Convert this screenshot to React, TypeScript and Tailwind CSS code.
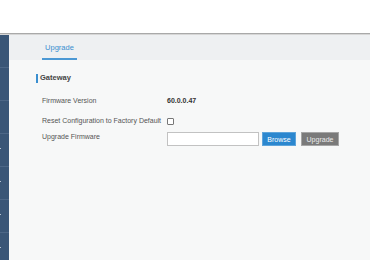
import React from "react";

export default function App() {
  const items = [0, 1, 2, 3, 4, 5, 6];
  return (
    <div
      className="w-[370px] h-[260px] overflow-hidden bg-white flex flex-col"
      style={{ fontFamily: '"Liberation Sans", Arial, sans-serif' }}
    >
      <div className="h-[33px] shrink-0 bg-white" />
      <div className="h-[1px] shrink-0 bg-[#a9a9a9]" />
      <div className="h-[1px] shrink-0 bg-[#d6d6d6]" />
      <div className="flex flex-1 min-h-0">
        <div className="w-[9px] shrink-0 bg-[#3a5677] flex flex-col">
          {items.map((i) => (
            <div
              key={i}
              className="h-[33px] shrink-0 border-b border-[#4d6787] relative"
            >
              {i >= 3 && (
                <div className="absolute left-0 top-[14px] w-[1px] h-[1px] bg-[#b8c4d2]" />
              )}
            </div>
          ))}
        </div>
        <div className="flex-1 bg-[#f7f8f8] flex flex-col">
          <div className="h-[25px] bg-[#eef0f2] flex items-end pl-[33px]">
            <div className="h-[25px] w-[35px] flex flex-col items-center justify-between">
              <span className="text-[7.5px] leading-none text-[#3a8fd0] mt-[9px]">
                Upgrade
              </span>
              <div className="h-[2px] w-full bg-[#4b98d4]" />
            </div>
          </div>
          <div className="pl-[27px] pt-[13px]">
            <div className="flex items-center h-[10px]">
              <div className="w-[2px] h-[9px] bg-[#3a8fd0]" />
              <span className="ml-[2px] text-[7.5px] font-bold leading-none text-[#444]">
                Gateway
              </span>
            </div>
            <div className="pl-[6px] mt-[11px] text-[7px] text-[#555] leading-none">
              <div className="flex items-center h-[12px]">
                <span className="w-[125px]">Firmware Version</span>
                <span className="font-bold text-[#333]">60.0.0.47</span>
              </div>
              <div className="flex items-center h-[12px] mt-[8px]">
                <span className="w-[125px]">Reset Configuration to Factory Default</span>
                <span className="mt-[3px] w-[7px] h-[7px] border border-[#777] rounded-[1px] bg-white" />
              </div>
              <div className="flex items-start h-[14px] mt-[6px]">
                <span className="w-[125px] mt-[1px]">Upgrade Firmware</span>
                <span className="w-[92px] h-[14px] border border-[#c2c2c2] bg-white" />
                <span className="ml-[3px] w-[34px] h-[14px] bg-[#2b87cf] border border-[#5ea4da] text-white flex items-center justify-center">
                  Browse
                </span>
                <span className="ml-[5px] w-[38px] h-[14px] bg-[#7a7a7a] border border-[#a6a6a6] text-[#ececec] flex items-center justify-center">
                  Upgrade
                </span>
              </div>
            </div>
          </div>
        </div>
      </div>
    </div>
  );
}
